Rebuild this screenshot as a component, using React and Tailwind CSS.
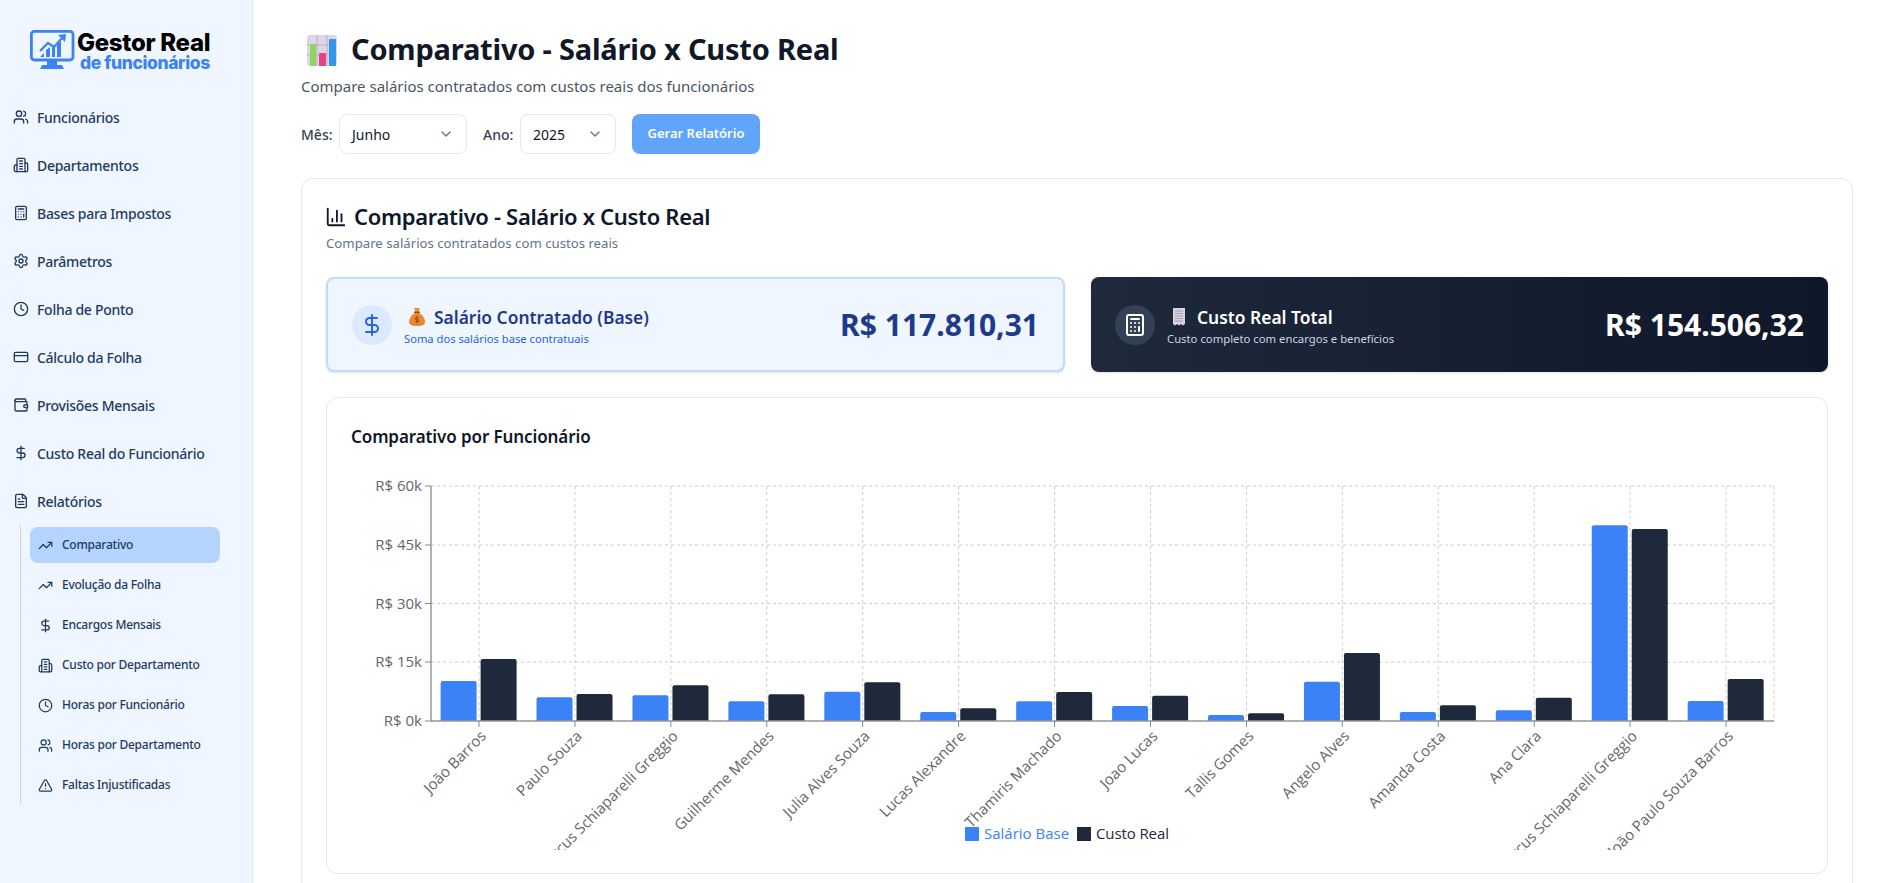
import React from 'react';
import {
  Users, Calculator, Settings, Clock, CreditCard, Wallet, DollarSign, FileText,
  TrendingUp, TriangleAlert, ChevronDown, ChartColumn,
} from 'lucide-react';

// the newer lucide Building2 has another shape, this is the one in the picture
function TallBuilding({ className }) {
  return (
    <svg viewBox="0 0 24 24" fill="none" stroke="currentColor" strokeWidth="2" strokeLinecap="round" strokeLinejoin="round" className={className}>
      <path d="M6 22V4a2 2 0 0 1 2-2h8a2 2 0 0 1 2 2v18Z" />
      <path d="M6 12H4a2 2 0 0 0-2 2v6a2 2 0 0 0 2 2h2" />
      <path d="M18 9h2a2 2 0 0 1 2 2v9a2 2 0 0 1-2 2h-2" />
      <path d="M10 6h4" />
      <path d="M10 10h4" />
      <path d="M10 14h4" />
      <path d="M10 18h4" />
    </svg>
  );
}

const MENU = [
  { label: 'Funcionários', icon: Users },
  { label: 'Departamentos', icon: TallBuilding },
  { label: 'Bases para Impostos', icon: Calculator },
  { label: 'Parâmetros', icon: Settings },
  { label: 'Folha de Ponto', icon: Clock },
  { label: 'Cálculo da Folha', icon: CreditCard },
  { label: 'Provisões Mensais', icon: Wallet },
  { label: 'Custo Real do Funcionário', icon: DollarSign },
  { label: 'Relatórios', icon: FileText },
];

const SUBMENU = [
  { label: 'Comparativo', icon: TrendingUp, active: true },
  { label: 'Evolução da Folha', icon: TrendingUp },
  { label: 'Encargos Mensais', icon: DollarSign },
  { label: 'Custo por Departamento', icon: TallBuilding },
  { label: 'Horas por Funcionário', icon: Clock },
  { label: 'Horas por Departamento', icon: Users },
  { label: 'Faltas Injustificadas', icon: TriangleAlert },
];

// tops are page y of each bar, baseline sits at 721
const EMPLOYEES = [
  { name: 'João Barros', base: 681, real: 659 },
  { name: 'Paulo Souza', base: 697.3, real: 694 },
  { name: 'Marcus Schiaparelli Greggio', base: 695.3, real: 685.3 },
  { name: 'Guilherme Mendes', base: 701.3, real: 694.3 },
  { name: 'Julia Alves Souza', base: 691.7, real: 682.3 },
  { name: 'Lucas Alexandre', base: 712, real: 708.3 },
  { name: 'Thamiris Machado', base: 701.3, real: 692 },
  { name: 'Joao Lucas', base: 706, real: 695.7 },
  { name: 'Tallis Gomes', base: 715, real: 713.3 },
  { name: 'Angelo Alves', base: 681.7, real: 653 },
  { name: 'Amanda Costa', base: 712, real: 705.3 },
  { name: 'Ana Clara', base: 710.3, real: 697.7 },
  { name: 'Marcus Schiaparelli Greggio', base: 525.3, real: 529 },
  { name: 'João Paulo Souza Barros', base: 701, real: 679 },
];

const Y_TICKS = [
  { label: 'R$ 60k', y: 486 },
  { label: 'R$ 45k', y: 545 },
  { label: 'R$ 30k', y: 603.5 },
  { label: 'R$ 15k', y: 662 },
  { label: 'R$ 0k', y: 721 },
];

const LEFT = 431;
const RIGHT = 1774;
const BOTTOM = 721;
const STEP = (RIGHT - LEFT) / EMPLOYEES.length;

function barPath(x, top, w) {
  return `M${x} ${BOTTOM}V${top + 2}Q${x} ${top} ${x + 2} ${top}H${x + w - 2}Q${x + w} ${top} ${x + w} ${top + 2}V${BOTTOM}Z`;
}

function Logo() {
  return (
    <div className="flex items-center h-[40px] mt-[30px] pl-[30px]">
      <svg width="45" height="40" viewBox="0 0 45 40" className="shrink-0">
        <rect x="1.4" y="1.4" width="41.600" height="28.600" rx="3" fill="none" stroke="#3b82f6" strokeWidth="2.800" />
        <path d="M17 31h10v4h5l2 4H10l2-4h5z" fill="#3b82f6" />
        <path d="M10 27l4-4v4zM16 27v-7l4-3v10zM22 27V16l3 2v9zM27 27V15l4-4v16z" fill="#3b82f6" />
        <path d="M10 21l8-8 6 4 9-10" fill="none" stroke="#3b82f6" strokeWidth="2.200" />
        <path d="M28 5l8-1-1 8z" fill="#3b82f6" />
      </svg>
      <div className="ml-[2px] font-['Inter',sans-serif]">
        <div className="text-[24px] leading-[25px] font-extrabold text-black tracking-[-0.3px] whitespace-nowrap">Gestor Real</div>
        <div className="text-[17.5px] leading-[15px] font-extrabold text-[#3b82f6] tracking-[-0.4px] ml-[3px] whitespace-nowrap">de funcionários</div>
      </div>
    </div>
  );
}

function Sidebar() {
  return (
    <aside className="w-[253px] shrink-0 h-full bg-[#eff6ff] border-r border-[#dbeafe]">
      <Logo />
      <nav className="mt-[23px] text-[#1e3a5f]">
        {MENU.map(item => {
          const Icon = item.icon;
          return (
            <div key={item.label} className="h-[48px] flex items-center pl-[13px] gap-[8px] text-[14px] font-medium tracking-[-0.28px]">
              <Icon className="w-[16px] h-[16px] shrink-0" />
              <span>{item.label}</span>
            </div>
          );
        })}
        <div className="ml-[20px] mr-[32px] border-l border-[#cbd5e1] pl-[9px] pt-[2px] h-[279px]">
          {SUBMENU.map(item => {
            const Icon = item.icon;
            return (
              <div
                key={item.label}
                className={`h-[36px] mb-[4px] flex items-center pl-[8px] gap-[9px] text-[12px] font-medium tracking-[-0.25px] rounded-lg ${item.active ? 'bg-[#b5d4fd]' : ''}`}
              >
                <Icon className="w-[15px] h-[15px] shrink-0" />
                <span>{item.label}</span>
              </div>
            );
          })}
        </div>
      </nav>
    </aside>
  );
}

function Select({ value, width }) {
  return (
    <div className={`h-[40px] ${width} flex items-center justify-between bg-white border border-[#e2e8f0] rounded-lg px-[12px] text-[14px] font-normal text-[#0f172a]`}>
      <span>{value}</span>
      <ChevronDown className="w-4 h-4 text-[#64748b]" />
    </div>
  );
}

function ChartEmoji() {
  return (
    <svg width="30" height="31" viewBox="0 0 30 31" className="shrink-0">
      <rect x="0" y="0" width="30" height="31" rx="3" fill="#dcd6e6" />
      <path d="M10 0v31M20 0v31M0 10h30M0 20h30" stroke="#b9b1c9" strokeWidth="1" />
      <rect x="3" y="9" width="6" height="22" rx="1" fill="#8fd65f" />
      <rect x="12" y="18" width="7" height="13" rx="1" fill="#e8417f" />
      <rect x="22" y="4" width="7" height="27" rx="1" fill="#2f96e8" />
    </svg>
  );
}

function BagEmoji() {
  return (
    <svg width="18" height="19" viewBox="0 0 18 19" className="shrink-0">
      <path d="M6 1h6l-1.500 4h-3z" fill="#e8963a" />
      <rect x="6" y="4.500" width="6" height="1.500" fill="#8a4b16" />
      <path d="M7 6h4c4 2 6 6 6 8.500 0 3-2 4.500-8 4.500s-8-1.500-8-4.500C1 12 3 8 7 6z" fill="#e8892e" />
      <path d="M9 9v7M10.500 10.500H8.300a1 1 0 0 0 0 2.200h1.400a1 1 0 0 1 0 2.200H7.500" fill="none" stroke="#8a4b16" strokeWidth="1" />
    </svg>
  );
}

function ReceiptEmoji() {
  return (
    <svg width="18" height="19" viewBox="0 0 18 19" className="shrink-0">
      <path d="M3 1h12v16l-2 1.500-2-1.500-2 1.500-2-1.500-2 1.500-2-1.500z" fill="#d9d2e0" />
      <path d="M5 4h8M5 6.500h8M5 9h8M5 11.500h8M5 14h8" stroke="#a79fb3" strokeWidth="1" />
    </svg>
  );
}

function Chart() {
  return (
    <svg width="1452" height="384" viewBox="351 466 1452 384" className="block mt-[15px] font-['Open_Sans',sans-serif]">
      {Y_TICKS.map(t => (
        <line key={t.y} x1={LEFT} x2={RIGHT} y1={t.y} y2={t.y} stroke="#cccccc" strokeDasharray="3 3" />
      ))}
      {EMPLOYEES.map((e, i) => (
        <line key={i} x1={LEFT + STEP * (i + 0.5)} x2={LEFT + STEP * (i + 0.5)} y1={486} y2={BOTTOM} stroke="#cccccc" strokeDasharray="3 3" />
      ))}
      <line x1={RIGHT} x2={RIGHT} y1={486} y2={BOTTOM} stroke="#cccccc" strokeDasharray="3 3" />

      {EMPLOYEES.map((e, i) => {
        const x = LEFT + STEP * i + 9.6;
        return (
          <g key={i}>
            <path d={barPath(x, e.base, 36)} fill="#3b82f6" />
            <path d={barPath(x + 40, e.real, 36)} fill="#1e293b" />
          </g>
        );
      })}

      <line x1={LEFT} x2={LEFT} y1={486} y2={BOTTOM} stroke="#999999" strokeWidth="1.5" />
      <line x1={LEFT} x2={RIGHT} y1={BOTTOM} y2={BOTTOM} stroke="#999999" strokeWidth="1.5" />

      {Y_TICKS.map(t => (
        <g key={t.y}>
          <line x1={LEFT - 6} x2={LEFT} y1={t.y} y2={t.y} stroke="#888888" />
          <text x={LEFT - 9} y={t.y + 5} textAnchor="end" fontSize="15" fill="#666666">{t.label}</text>
        </g>
      ))}

      {EMPLOYEES.map((e, i) => {
        const cx = LEFT + STEP * (i + 0.5);
        return (
          <g key={i}>
            <line x1={cx} x2={cx} y1={BOTTOM} y2={BOTTOM + 6} stroke="#888888" />
            <text x={cx} y={740.4} textAnchor="end" fontSize="15" fill="#666666" transform={`rotate(-45 ${cx} 729)`}>
              {e.name}
            </text>
          </g>
        );
      })}

      <rect x="965" y="827" width="14" height="14" fill="#3b82f6" />
      <text x="984" y="839" fontSize="15" fill="#3b82f6">Salário Base</text>
      <rect x="1077" y="827" width="14" height="14" fill="#1e293b" />
      <text x="1096" y="839" fontSize="15" letterSpacing="-0.1" fill="#1e293b">Custo Real</text>
    </svg>
  );
}

export default function App() {
  return (
    <div className="w-screen h-screen overflow-hidden flex bg-white font-['Noto_Sans',sans-serif]">
      <Sidebar />
      <main className="flex-1 min-w-0 pl-[48px] pr-[44px] overflow-hidden">
        <div className="h-[36px] mt-[31px] flex items-center">
          <div className="ml-[6px] mr-[14px] mt-[2px]"><ChartEmoji /></div>
          <h1 className="text-[29px] leading-[36px] font-bold tracking-[-0.2px] text-[#111827] whitespace-nowrap">Comparativo - Salário x Custo Real</h1>
        </div>
        <p className="mt-[7px] text-[15px] leading-[24px] text-[#4b5563]">Compare salários contratados com custos reais dos funcionários</p>

        <div className="mt-[16px] flex items-center text-[14px] font-medium text-[#374151]">
          <span className="w-[38px]">Mês:</span>
          <Select value="Junho" width="w-[128px]" />
          <span className="ml-[16px] w-[37px]">Ano:</span>
          <Select value="2025" width="w-[96px]" />
          <button className="ml-[16px] h-[40px] w-[128px] rounded-lg bg-[#60a5fa] text-white text-[13px] font-semibold">Gerar Relatório</button>
        </div>

        <section className="mt-[24px] border border-[#e2e8f0] rounded-xl bg-white p-[24px]">
          <div className="flex items-center h-[28px]">
            <ChartColumn className="w-[22px] h-[22px] text-[#0f172a] mr-[7px] -ml-[1px]" />
            <h2 className="text-[22px] leading-[28px] font-semibold tracking-[-0.32px] pb-[2px] text-[#0f172a] whitespace-nowrap">Comparativo - Salário x Custo Real</h2>
          </div>
          <p className="mt-[2px] text-[13.2px] leading-[20px] text-[#64748b]">Compare salários contratados com custos reais</p>

          <div className="mt-[24px] grid grid-cols-[739px_737px] gap-[26px]">
            <div className="h-[95px] flex items-center justify-between bg-[#eff6ff] border-2 border-[#bfdbfe] rounded-lg shadow-sm pl-[24px] pr-[24px]">
              <div className="flex items-center gap-[12px]">
                <div className="w-[40px] h-[40px] rounded-full bg-[#dbeafe] flex items-center justify-center">
                  <DollarSign className="w-6 h-6 text-[#2563eb]" />
                </div>
                <div>
                  <div className="flex items-center gap-[8px] pl-[4px] text-[17.4px] leading-[28px] font-semibold text-[#1e3a8a]">
                    <BagEmoji />
                    <span>Salário Contratado (Base)</span>
                  </div>
                  <div className="text-[11.2px] leading-[16px] text-[#2563eb]">Soma dos salários base contratuais</div>
                </div>
              </div>
              <div className="text-[30px] leading-[36px] font-bold text-[#1e3a8a]">R$ 117.810,31</div>
            </div>

            <div className="h-[95px] flex items-center justify-between bg-gradient-to-r from-[#1e293b] to-[#0f172a] rounded-lg shadow-sm pl-[24px] pr-[24px]">
              <div className="flex items-center gap-[12px]">
                <div className="w-[40px] h-[40px] rounded-full bg-[#334155] flex items-center justify-center">
                  <Calculator className="w-6 h-6 text-white" />
                </div>
                <div>
                  <div className="flex items-center gap-[9px] pl-[3px] text-[17.4px] leading-[28px] font-semibold text-white">
                    <ReceiptEmoji />
                    <span>Custo Real Total</span>
                  </div>
                  <div className="text-[11.3px] leading-[16px] text-[#cbd5e1]">Custo completo com encargos e benefícios</div>
                </div>
              </div>
              <div className="text-[30px] leading-[36px] font-bold text-white">R$ 154.506,32</div>
            </div>
          </div>

          <div className="mt-[25px] h-[477px] border border-[#e2e8f0] rounded-xl bg-white pt-[25px] px-[24px]">
            <h3 className="text-[17px] leading-[28px] font-semibold tracking-[-0.1px] text-[#0f172a]">Comparativo por Funcionário</h3>
            <Chart />
          </div>
        </section>
      </main>
    </div>
  );
}
